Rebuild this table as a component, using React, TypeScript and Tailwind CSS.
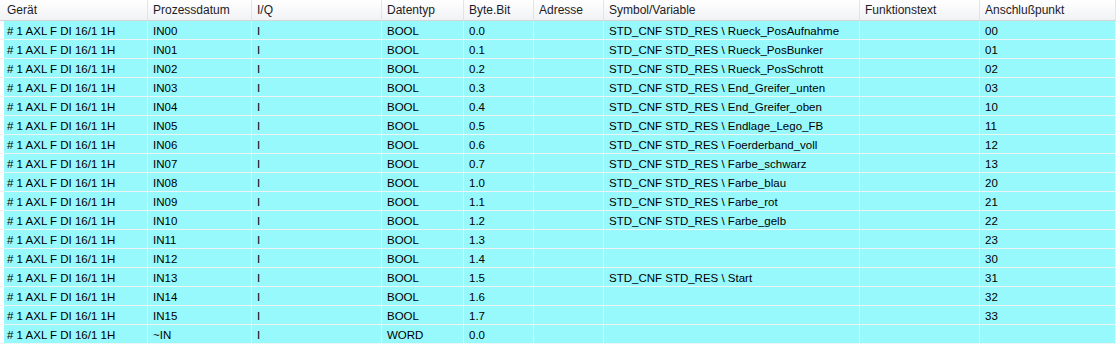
import React from "react";

const columns = [
  { label: "Gerät", w: "w-[148px]" },
  { label: "Prozessdatum", w: "w-[104px]" },
  { label: "I/Q", w: "w-[130px]" },
  { label: "Datentyp", w: "w-[82px]" },
  { label: "Byte.Bit", w: "w-[70px]" },
  { label: "Adresse", w: "w-[70px]" },
  { label: "Symbol/Variable", w: "w-[256px]" },
  { label: "Funktionstext", w: "w-[120px]" },
  { label: "Anschlußpunkt", w: "flex-1" },
];

const symbols = [
  "Rueck_PosAufnahme",
  "Rueck_PosBunker",
  "Rueck_PosSchrott",
  "End_Greifer_unten",
  "End_Greifer_oben",
  "Endlage_Lego_FB",
  "Foerderband_voll",
  "Farbe_schwarz",
  "Farbe_blau",
  "Farbe_rot",
  "Farbe_gelb",
  "",
  "",
  "Start",
  "",
  "",
  "",
];

const rows = Array.from({ length: 17 }, (_, i) => {
  const last = i === 16;
  const sym = symbols[i];
  return [
    "# 1 AXL F DI 16/1 1H",
    last ? "~IN" : "IN" + String(i).padStart(2, "0"),
    "I",
    last ? "WORD" : "BOOL",
    last ? "0.0" : Math.floor(i / 8) + "." + (i % 8),
    "",
    sym ? "STD_CNF STD_RES \\ " + sym : "",
    "",
    last ? "" : String(Math.floor(i / 4)) + String(i % 4),
  ];
});

export default function App() {
  return (
    <div className="w-[1116px] h-[344px] overflow-hidden bg-white text-black font-['Liberation_Sans',Arial,sans-serif]">
      {/* Kopfzeile */}
      <div className="flex h-[21px] text-[12px] border-b border-[#d5d5d5] bg-gradient-to-b from-white to-[#f1f2f4]">
        {columns.map((c, i) => (
          <div
            key={c.label}
            className={`${c.w} shrink-0 h-full border-r border-[#e3e4e6] leading-[20px] text-[#1c1c28] ${
              i === 0 ? "pl-[7px]" : "pl-[5px]"
            }`}
          >
            {c.label}
          </div>
        ))}
      </div>

      {rows.map((r, ri) => (
        <div key={ri} className="flex h-[19px] text-[11.5px] border-b border-[#eef3f3] pl-[4px] bg-white">
          {r.map((cell, ci) => (
            <div
              key={ci}
              className={`${ci === 0 ? "w-[144px]" : columns[ci].w} shrink-0 h-full bg-[#98f9fd] border-r border-[#eef3f3] leading-[21px] whitespace-nowrap overflow-hidden ${
                ci === 0 ? "pl-[3px]" : "pl-[5px]"
              }`}
            >
              {cell}
            </div>
          ))}
        </div>
      ))}
    </div>
  );
}
